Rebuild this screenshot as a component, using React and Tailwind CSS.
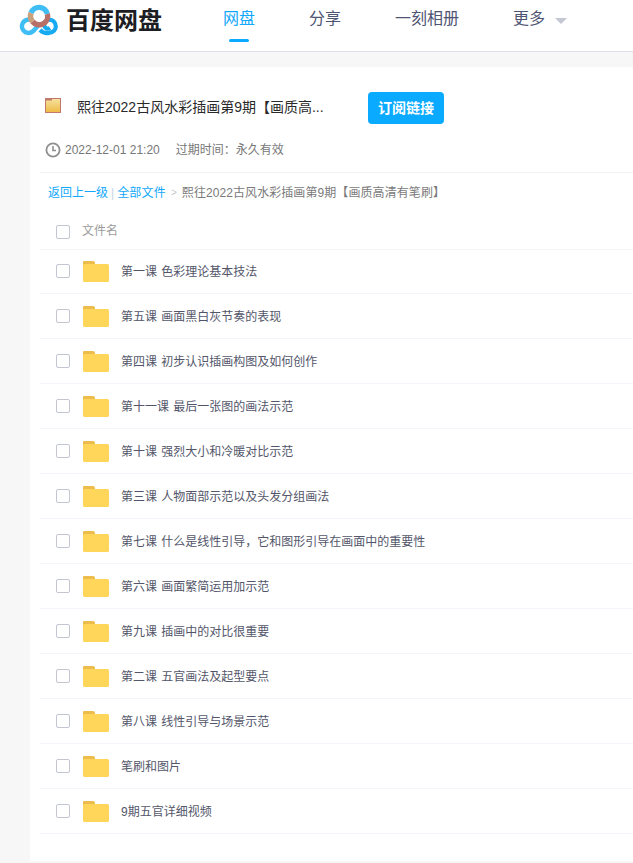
const rows = [
  "第一课 色彩理论基本技法",
  "第五课 画面黑白灰节奏的表现",
  "第四课 初步认识插画构图及如何创作",
  "第十一课 最后一张图的画法示范",
  "第十课 强烈大小和冷暖对比示范",
  "第三课 人物面部示范以及头发分组画法",
  "第七课 什么是线性引导，它和图形引导在画面中的重要性",
  "第六课 画面繁简运用加示范",
  "第九课 插画中的对比很重要",
  "第二课 五官画法及起型要点",
  "第八课 线性引导与场景示范",
  "笔刷和图片",
  "9期五官详细视频",
];
const font = { fontFamily: '"Liberation Sans", "Noto Sans CJK SC", sans-serif' };

function Logo() {
  return (
    <svg width="40" height="34" viewBox="0 0 40 34" className="shrink-0">
      <path d="M13 17.500 A6.700 6.700 0 1 0 9.500 30 C13.500 30 15.500 27 21 20" fill="none" stroke="#3fbdf5" strokeWidth="4.400" />
      <path d="M21 27 C24 30 27 30.500 30 30 C34.500 29.500 37 26.500 36.800 23 C36.500 19 33.500 16.500 30 16.800 C27 17 24.500 20 25.300 23 C26 25.500 29 26.300 31 25" fill="none" stroke="#16aaf2" strokeWidth="4.200" />
      <path d="M12 10 A8.500 8.500 0 0 1 28.300 11" fill="none" stroke="#3fbdf5" strokeWidth="5.400" />
      <path d="M28.400 11 A8.500 8.500 0 0 1 13.500 18.500" fill="none" stroke="#b86f68" strokeWidth="5.400" />
      <path d="M13.500 18.500 A8.500 8.500 0 0 1 12 10" fill="none" stroke="#c9a07c" strokeWidth="5.400" />
    </svg>
  );
}

function BigFolder() {
  return (
    <svg width="26" height="21" viewBox="0 0 26 21" className="shrink-0">
      <path d="M1 0 H10 Q12 0 12 2 V6 H0 V1 Q0 0 1 0Z" fill="#ecbd4c" />
      <rect x="0" y="3" width="26" height="18" rx="1.500" fill="#ffd659" />
    </svg>
  );
}

function SmallFolder() {
  return (
    <svg width="16" height="15" viewBox="0 0 16 15" className="shrink-0">
      <defs>
        <linearGradient id="sf" x1="0" y1="0" x2="0" y2="1">
          <stop offset="0" stopColor="#f6e3a0" />
          <stop offset="1" stopColor="#efb945" />
        </linearGradient>
      </defs>
      <rect x="0.500" y="0.500" width="15" height="14" fill="url(#sf)" stroke="#c0796a" />
      <rect x="1" y="1" width="6" height="1.500" fill="#c0796a" />
    </svg>
  );
}

function Clock() {
  return (
    <svg width="16" height="16" viewBox="0 0 16 16" className="shrink-0">
      <circle cx="8" cy="8" r="6.600" fill="none" stroke="#8f8f8f" strokeWidth="1.800" />
      <path d="M8 4 V8.500 H11" fill="none" stroke="#8f8f8f" strokeWidth="1.600" />
    </svg>
  );
}

function Box() {
  return <div className="w-[14px] h-[14px] border border-[#c3c6d0] rounded-[2px] bg-white shrink-0" />;
}

export default function App() {
  return (
    <div className="w-[633px] h-[863px] overflow-hidden bg-[#f7f7f7] flex flex-col" style={font}>
      <header className="h-[52px] shrink-0 bg-white border-b border-[#dfe0e8] flex">
        <div className="w-[223px] flex items-start pl-[19px] pt-[3px] shrink-0">
          <Logo />
          <span className="ml-[7px] mt-[1px] text-[24px] leading-[34px] font-bold text-[#1d1d24]">百度网盘</span>
        </div>
        <nav className="flex items-start text-[16px] leading-[24px] text-[#4e5573] pt-[7px]">
          <div className="w-[32px] mr-[54px] flex flex-col items-center text-[#12a8fb]">
            <span>网盘</span>
            <span className="w-[20px] h-[3px] rounded-full bg-[#09aaff] mt-[8px]" />
          </div>
          <span className="mr-[54px]">分享</span>
          <span className="mr-[54px]">一刻相册</span>
          <span>更多</span>
          <span className="ml-[10px] mt-[11px] w-0 h-0 border-x-[6px] border-x-transparent border-t-[6px] border-t-[#c4c7d2]" />
        </nav>
      </header>

      <main className="ml-[30px] mt-[15px] flex-1 mb-[2px] bg-white pl-[10px]">
        <div className="border-b border-[#f2f2f4] h-[106px]">
          <div className="flex items-start pt-[25px] pl-[5px]">
            <div className="pt-[6px]"><SmallFolder /></div>
            <h1 className="ml-[16px] w-[291px] h-[34px] text-[14px] leading-[30px] text-[#2a2a2a] whitespace-nowrap">熙往2022古风水彩插画第9期【画质高...</h1>
            <button className="h-[32px] w-[76px] rounded-[4px] bg-[#09aaff] text-white text-[14px] font-bold">订阅链接</button>
          </div>
          <div className="flex items-center mt-[14px] pl-[5px] h-[20px] text-[12px] text-[#777777]">
            <Clock />
            <span className="ml-[4px]">2022-12-01 21:20</span>
            <span className="ml-[16px]">过期时间：永久有效</span>
          </div>
        </div>

        <div className="h-[42px] flex items-center pl-[8px] pb-[3px] text-[12px] text-[#7a7a7a]">
          <span className="text-[#12a8fb]">返回上一级</span>
          <span className="mx-[3px] text-[#c4d4e4]">|</span>
          <span className="text-[#12a8fb] tracking-[0.2px]">全部文件</span>
          <span className="mx-[5px] text-[#c8c8c8] text-[10px]">&gt;</span>
          <span className="tracking-[0.08px]">熙往2022古风水彩插画第9期【画质高清有笔刷】</span>
        </div>

        <div className="h-[35px] flex items-center pl-[16px] border-b border-[#f4f5f9] text-[12px] text-[#9b9b9b]">
          <Box />
          <span className="ml-[12px] mt-[-2px]">文件名</span>
        </div>

        {rows.map((t, i) => (
          <div key={t} className={i === 0 ? "h-[44px] pb-[1px] flex items-center pl-[16px] border-b border-[#f3f5fb]" : "h-[45px] flex items-center pl-[16px] border-b border-[#f3f5fb]"}>
            <Box />
            <div className="ml-[13px] flex"><BigFolder /></div>
            <span className="ml-[12px] mt-[2px] text-[12px] text-[#53566a] [word-spacing:1px]">{t}</span>
          </div>
        ))}
      </main>
    </div>
  );
}
